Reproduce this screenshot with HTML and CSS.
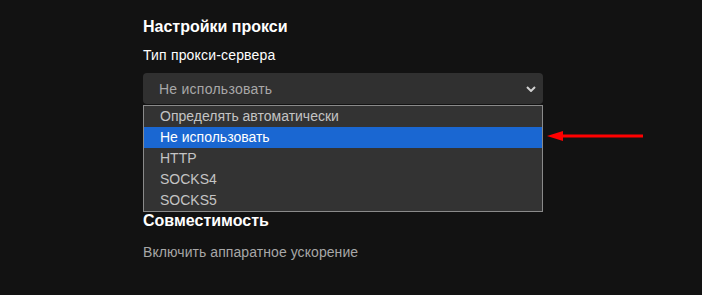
FILE: index.html
```html
<!DOCTYPE html>
<html lang="ru">
<head>
<meta charset="utf-8">
<link rel="stylesheet" href="styles.css">
</head>
<body>
<main class="page">
  <section class="section proxy">
    <h2 class="title">Настройки прокси</h2>
    <div class="label">Тип прокси-сервера</div>
    <div class="select-wrap">
      <div class="select">
        <span class="select-value">Не использовать</span>
        <svg class="chevron" width="10" height="6" viewBox="0 0 10 6"><path d="M1 1 L5 5 L9 1" fill="none" stroke="#d0d0d0" stroke-width="2"/></svg>
      </div>
      <ul class="options">
        <li class="option">Определять автоматически</li>
        <li class="option selected">Не использовать</li>
        <li class="option">HTTP</li>
        <li class="option">SOCKS4</li>
        <li class="option">SOCKS5</li>
      </ul>
      <svg class="arrow" width="100" height="12" viewBox="0 0 100 12">
        <path d="M0 6 L16 1 L16 11 Z" fill="#ff0000"/>
        <rect x="14" y="4.5" width="82" height="3" fill="#ff0000"/>
      </svg>
    </div>
  </section>
  <section class="section compat">
    <h2 class="title">Совместимость</h2>
    <div class="setting">Включить аппаратное ускорение</div>
  </section>
</main>
</body>
</html>
```
FILE: styles.css
```css
html, body {
  margin: 0;
  padding: 0;
  background: #121212;
}
body {
  font-family: "Liberation Sans", Arial, sans-serif;
  width: 702px;
  height: 295px;
  overflow: hidden;
}
.page {
  padding: 17px 0 0 143px;
  width: 400px;
}
.section {
  display: flex;
  flex-direction: column;
}
.title {
  margin: 0;
  font-size: 16px;
  line-height: 20px;
  font-weight: 700;
  color: #ffffff;
}
.label {
  margin-top: 8px;
  font-size: 14px;
  line-height: 20px;
  letter-spacing: 0.17px;
  color: #ffffff;
  font-weight: 400;
}
.select-wrap {
  position: relative;
  margin-top: 8px;
}
.select {
  height: 31px;
  box-sizing: border-box;
  background: #303030;
  border-radius: 4px;
  display: flex;
  align-items: center;
  justify-content: space-between;
  padding: 0 7px 0 16px;
}
.select-value {
  font-size: 14px;
  line-height: 20px;
  letter-spacing: 0.25px;
  color: #a8a8a8;
}
.chevron {
  display: block;
}
.options {
  position: absolute;
  left: 0;
  top: 32px;
  width: 400px;
  box-sizing: border-box;
  margin: 0;
  padding: 0;
  list-style: none;
  background: #333333;
  border: 1px solid #8a8a8a;
  z-index: 2;
}
.option {
  height: 21px;
  line-height: 21px;
  font-size: 14px;
  padding-left: 16px;
  color: #c4c4c4;
}
.option.selected {
  background: #1a67d2;
  color: #ffffff;
}
.arrow {
  position: absolute;
  left: 404px;
  top: 57px;
}
.compat {
  margin-top: 107px;
}
.setting {
  margin-top: 11px;
  font-size: 14px;
  line-height: 20px;
  letter-spacing: 0.07px;
  color: #a7a7a7;
}
```
